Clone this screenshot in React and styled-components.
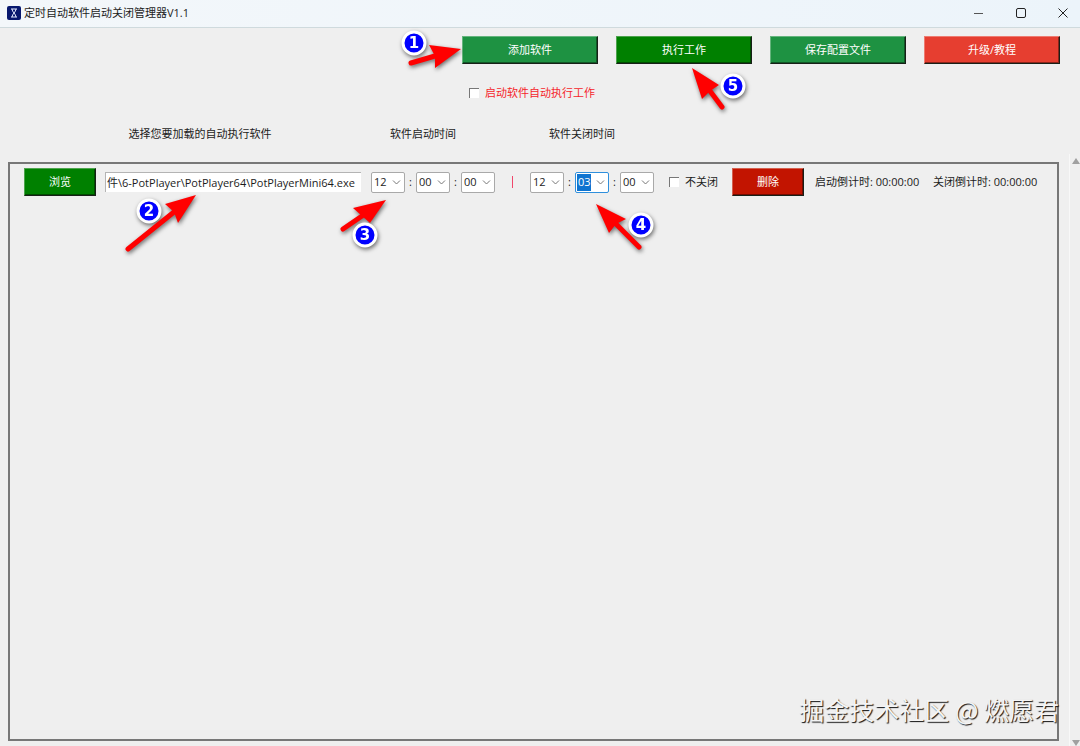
import React from "react";
import styled, { createGlobalStyle } from "styled-components";

const GlobalStyle = createGlobalStyle`
  * { box-sizing: border-box; }
  body {
    margin: 0;
    background: #efefef;
    color: #1c1c1c;
    font: 11px/16px "Open Sans", "Noto Sans CJK SC", sans-serif;
  }
  button, input, select { font: inherit; color: inherit; margin: 0; }
`;

const Window = styled.div`
  position: relative;
  display: flex;
  flex-direction: column;
  min-height: 100vh;
`;

const TitleBar = styled.header`
  display: flex;
  align-items: center;
  height: 28px;
  padding: 0 5px 2px 7px;
  background: linear-gradient(90deg, #f3f7fa, #ecf4fa);
  border-bottom: 1px solid #cfdadd;
`;

const Title = styled.h1`
  flex: 1;
  margin: 0 0 0 3px;
  font-size: 11px;
  font-weight: 400;
  line-height: 16px;
`;

const WindowButtons = styled.div`
  display: flex;
  gap: 18px;
`;

const WindowButton = styled.button`
  display: flex;
  align-items: center;
  justify-content: center;
  width: 24px;
  height: 24px;
  padding: 0;
  border: 0;
  background: none;
`;

const Toolbar = styled.div`
  display: flex;
  justify-content: flex-end;
  gap: 18px;
  padding: 8px 20px 0;
`;

const Anchor = styled.div`
  position: relative;
  display: flex;
`;

const Button = styled.button`
  width: ${(p) => (p.$small ? 72 : 136)}px;
  height: 28px;
  padding: 0;
  border: 1px solid;
  border-color: ${(p) => p.$edge} #182018 #182018 ${(p) => p.$edge};
  box-shadow: inset -1px -1px rgba(0, 0, 0, 0.4);
  background: ${(p) => p.$color};
  color: #fff;
`;

const AutoRun = styled.div`
  display: flex;
  padding: 21px 0 0 469px;
  color: #f5262b;
`;

const CheckLabel = styled.label`
  display: flex;
  align-items: center;
  gap: 6px;
`;

const CheckBox = styled.input`
  appearance: none;
  width: 10px;
  height: 10px;
  border: solid;
  border-width: 1px 0 0 1px;
  border-color: #777;
  background: #fff;
`;

const Headings = styled.div`
  display: flex;
  padding: 25px 0 20px 24px;
`;

const Heading = styled.div`
  width: ${(p) => p.$width}px;
  text-align: center;
`;

const Body = styled.main`
  display: flex;
  flex: 1;
`;

const Panel = styled.section`
  flex: 1;
  margin: 0 10px 5px 8px;
  border: 2px solid #777;
`;

const TaskRow = styled.div`
  display: flex;
  align-items: center;
  padding: 4px 14px;
  white-space: nowrap;
`;

const PathInput = styled.input`
  width: 256px;
  height: 20px;
  padding: 0 3px 2px 1px;
  border: solid;
  border-width: 1px 0 0 1px;
  border-color: #b4b4b4;
  background: #fff;
`;

const PathField = styled(Anchor)`
  margin: 0 10px 0 9px;
`;

const TimeGroup = styled.div`
  display: flex;
  align-items: center;
`;

const Colon = styled.span`
  width: 11px;
  text-align: center;
`;

const Divider = styled.span`
  width: 1px;
  height: 12px;
  margin: 0 17px;
  background: #f0476b;
`;

const TimeSelect = styled.select`
  appearance: none;
  width: 34px;
  height: 21px;
  padding: 0 0 0 2px;
  border: 1px solid ${(p) => (p.$active ? "#2f8fdc" : "#a9a9a9")};
  border-radius: 2px;
  background: ${(p) =>
    p.$active
      ? "linear-gradient(#0f74d0, #0f74d0) 1px 1px / 14px 17px no-repeat #fff"
      : "#fff"};
  color: ${(p) => (p.$active ? "#fff" : "#222")};
`;

const Chevron = styled.svg`
  position: absolute;
  right: 4px;
  top: 7px;
  pointer-events: none;
`;

const RowLabel = styled(CheckLabel)`
  margin: 0 14px 0 15px;
`;

const Countdown = styled.span`
  width: ${(p) => p.$width}px;
  margin-left: ${(p) => p.$gap}px;
`;

const ScrollTrack = styled.div`
  display: flex;
  flex-direction: column;
  align-items: flex-end;
  justify-content: space-between;
  width: 11px;
  margin-top: -8px;
  padding: 4px 0 0;
  border-left: 1px solid #f8f8f8;
`;

const Marker = styled.svg`
  position: absolute;
  left: 0;
  top: 0;
  z-index: 2;
  overflow: visible;
  pointer-events: none;
  filter: drop-shadow(1px 2px 2px rgba(0, 0, 0, 0.55));
  font: bold 15px "DejaVu Sans", sans-serif;
`;

const Watermark = styled.div`
  position: absolute;
  right: 21px;
  bottom: 18px;
  color: #f4f4f4;
  font: 25px/38px "Noto Sans CJK SC", sans-serif;
  text-shadow: 1px 1px 1px #111;
`;

function Step({ number, tail, tip, left, right, neck, badge }) {
  return (
    <Marker width="1" height="1">
      <line x1={tail[0]} y1={tail[1]} x2={neck[0]} y2={neck[1]} stroke="#f00" strokeWidth="5" strokeLinecap="round" />
      <polygon points={[tip, left, neck, right].join(" ")} fill="#f00" />
      <circle cx={badge[0]} cy={badge[1]} r="11" fill="#00f" stroke="#fff" strokeWidth="3" />
      <text x={badge[0]} y={badge[1] + 5} textAnchor="middle" fill="#fff">{number}</text>
    </Marker>
  );
}

function Time({ value, label, active, children }) {
  return (
    <Anchor>
      <TimeSelect aria-label={label} defaultValue={value} $active={active}>
        <option>{value}</option>
      </TimeSelect>
      <Chevron width="9" height="7" viewBox="0 0 9 7" fill="none" stroke="#777">
        <path d="M1 1.5 4.5 5 8 1.5" />
      </Chevron>
      {children}
    </Anchor>
  );
}

export default function App() {
  return (
    <>
      <GlobalStyle />
      <Window>
        <TitleBar>
          <svg width="14" height="14" viewBox="0 0 14 14">
            <rect width="14" height="14" rx="2" fill="#08186e" />
            <path d="M4 3h6M4 11h6M5 3c0 3 4 5 4 8M9 3c0 3-4 5-4 8" fill="none" stroke="#e4ebff" />
          </svg>
          <Title>定时自动软件启动关闭管理器V1.1</Title>
          <WindowButtons>
            <WindowButton aria-label="最小化">
              <svg width="10" height="10" stroke="#555"><path d="M0 5.5h9" /></svg>
            </WindowButton>
            <WindowButton aria-label="最大化">
              <svg width="10" height="10" fill="none" stroke="#222"><rect x="0.5" y="0.5" width="9" height="9" rx="1.5" /></svg>
            </WindowButton>
            <WindowButton aria-label="关闭">
              <svg width="10" height="10" stroke="#222"><path d="M.5.5l9 9M9.500.5l-9 9" /></svg>
            </WindowButton>
          </WindowButtons>
        </TitleBar>

        <Toolbar>
          <Anchor>
            <Button $color="#1e9242" $edge="#65b47d">添加软件</Button>
            <Step number="1" tail={[-51, 27]} tip={[-1, 13]} left={[-33, 9]} neck={[-27, 20]} right={[-27, 32]} badge={[-48, 7]} />
          </Anchor>
          <Anchor>
            <Button $color="#008000" $edge="#4da34d">执行工作</Button>
            <Step number="5" tail={[106, 71]} tip={[76, 32]} left={[103, 49]} neck={[94, 55]} right={[86, 63]} badge={[117, 50]} />
          </Anchor>
          <Button $color="#1e9242" $edge="#65b47d">保存配置文件</Button>
          <Button $color="#e63e30" $edge="#ee7b70">升级/教程</Button>
        </Toolbar>

        <AutoRun>
          <CheckLabel>
            <CheckBox type="checkbox" />
            启动软件自动执行工作
          </CheckLabel>
        </AutoRun>

        <Headings>
          <Heading $width={352}>选择您要加载的自动执行软件</Heading>
          <Heading $width={94}>软件启动时间</Heading>
          <Heading $width={224}>软件关闭时间</Heading>
        </Headings>

        <Body>
          <Panel>
            <TaskRow>
              <Button $small $color="#008000" $edge="#4da34d">浏览</Button>
              <PathField>
                <PathInput aria-label="软件路径" defaultValue="件\6-PotPlayer\PotPlayer64\PotPlayerMini64.exe" />
                <Step number="2" tail={[23, 77]} tip={[91, 23]} left={[60, 32]} neck={[69, 40]} right={[73, 51]} badge={[44, 39]} />
              </PathField>
              <TimeGroup>
                <Time label="启动时" value="12">
                  <Step number="3" tail={[-28, 57]} tip={[15, 28]} left={[-18, 36]} neck={[-9, 44]} right={[-1, 51]} badge={[-6, 63]} />
                </Time>
                <Colon>:</Colon>
                <Time label="启动分" value="00" />
                <Colon>:</Colon>
                <Time label="启动秒" value="00" />
              </TimeGroup>
              <Divider />
              <TimeGroup>
                <Time label="关闭时" value="12" />
                <Colon>:</Colon>
                <Time label="关闭分" value="03" active>
                  <Step number="4" tail={[64, 75]} tip={[21, 32]} left={[51, 47]} neck={[41, 52]} right={[34, 61]} badge={[66, 53]} />
                </Time>
                <Colon>:</Colon>
                <Time label="关闭秒" value="00" />
              </TimeGroup>
              <RowLabel>
                <CheckBox type="checkbox" />
                不关闭
              </RowLabel>
              <Button $small $color="#c21400" $edge="#d4604f">删除</Button>
              <Countdown $width={104} $gap={11}>启动倒计时: 00:00:00</Countdown>
              <Countdown $width={104} $gap={14}>关闭倒计时: 00:00:00</Countdown>
            </TaskRow>
          </Panel>
          <ScrollTrack>
            <svg width="8" height="6" fill="#a0a0a0"><path d="M0 6 4 0 8 6z" /></svg>
            <svg width="8" height="6" fill="#a0a0a0"><path d="M0 0 4 6 8 0z" /></svg>
          </ScrollTrack>
        </Body>
        <Watermark>掘金技术社区 @ 燃愿君</Watermark>
      </Window>
    </>
  );
}
